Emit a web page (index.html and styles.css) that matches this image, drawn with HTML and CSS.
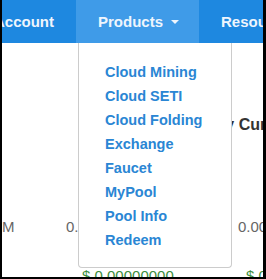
FILE: index.html
```html
<!DOCTYPE html>
<html lang="en">
<head>
  <meta charset="UTF-8">
  <meta name="viewport" content="width=device-width, initial-scale=1.0">
  <title>Products</title>
  <link rel="stylesheet" href="styles.css">
</head>
<body>
  <div class="frame">
    <nav class="navbar">
      <a class="nav-item nav-first">Account</a>
      <a class="nav-item active">Products <span class="caret"></span></a>
      <a class="nav-item">Resources</a>
    </nav>

    <div class="content">
      <div class="row heading">
        <div class="cell c1"></div>
        <div class="cell c2"></div>
        <div class="cell c3">Daily Currency</div>
      </div>
      <div class="row values">
        <div class="cell c1">M</div>
        <div class="cell c2">0.00000000</div>
        <div class="cell c3">0.00000000</div>
      </div>
      <div class="row money">
        <div class="cell c1"></div>
        <div class="cell c2">$ 0.00000000</div>
        <div class="cell c3">$ 0.00000000</div>
      </div>

      <!-- menu ouvert sur le contenu -->
      <ul class="dropdown">
        <li><a>Cloud Mining</a></li>
        <li><a>Cloud SETI</a></li>
        <li><a>Cloud Folding</a></li>
        <li><a>Exchange</a></li>
        <li><a>Faucet</a></li>
        <li><a>MyPool</a></li>
        <li><a>Pool Info</a></li>
        <li><a>Redeem</a></li>
      </ul>
    </div>
  </div>
</body>
</html>
```

FILE: styles.css
```css
body {
  margin: 0;
  padding: 0;
  background-color: #000;
  font-family: "Liberation Sans", Arial, sans-serif;
}
.frame {
  width: 266px;
  height: 279px;
  box-sizing: border-box;
  border-left: 2px solid #000;
  border-right: 3px solid #000;
  border-bottom: 2px solid #000;
  background-color: #fff;
  overflow: hidden;
  position: relative;
}
.navbar {
  display: flex;
  height: 43px;
  background-color: #1e88e0;
  white-space: nowrap;
}
.nav-item {
  display: flex;
  align-items: center;
  padding: 0 22px;
  color: #eef5fd;
  font-size: 15px;
  font-weight: bold;
}
.nav-first {
  margin-left: -30px;
}
.nav-item.active {
  background-color: #3f9be8;
  padding-right: 20px;
}
.caret {
  display: inline-block;
  width: 0;
  height: 0;
  margin-left: 8px;
  border-top: 4px solid #eef5fd;
  border-left: 4px solid transparent;
  border-right: 4px solid transparent;
}
.content {
  position: relative;
  height: 234px;
}
.row {
  display: flex;
  white-space: nowrap;
}
.cell {
  flex-shrink: 0;
  box-sizing: border-box;
}
.c1 {
  width: 64px;
  overflow: hidden;
}
.c2 {
  width: 172px;
  overflow: hidden;
}
.c3 {
  width: 100px;
}
.heading {
  padding-top: 73px;
  font-size: 16px;
  font-weight: bold;
  color: #333;
}
.heading .c3 {
  margin-left: -42px;
}
.values {
  padding-top: 84px;
  font-size: 15px;
  color: #666;
}
.money {
  padding-top: 32px;
  font-size: 15px;
  color: #3c8d3c;
}
.money .c2 {
  padding-left: 16px;
}
.money .c3 {
  padding-left: 8px;
}
.dropdown {
  position: absolute;
  top: 0;
  left: 76px;
  width: 152px;
  margin: 0;
  padding: 17px 0 15px;
  list-style-type: none;
  background-color: #fff;
  border: 1px solid #ccc;
  border-top: none;
  border-radius: 0 0 4px 4px;
}
.dropdown li {
  height: 24px;
  display: flex;
  align-items: center;
}
.dropdown a {
  padding-left: 26px;
  color: #2a86d4;
  font-size: 14.5px;
  font-weight: bold;
}
```
